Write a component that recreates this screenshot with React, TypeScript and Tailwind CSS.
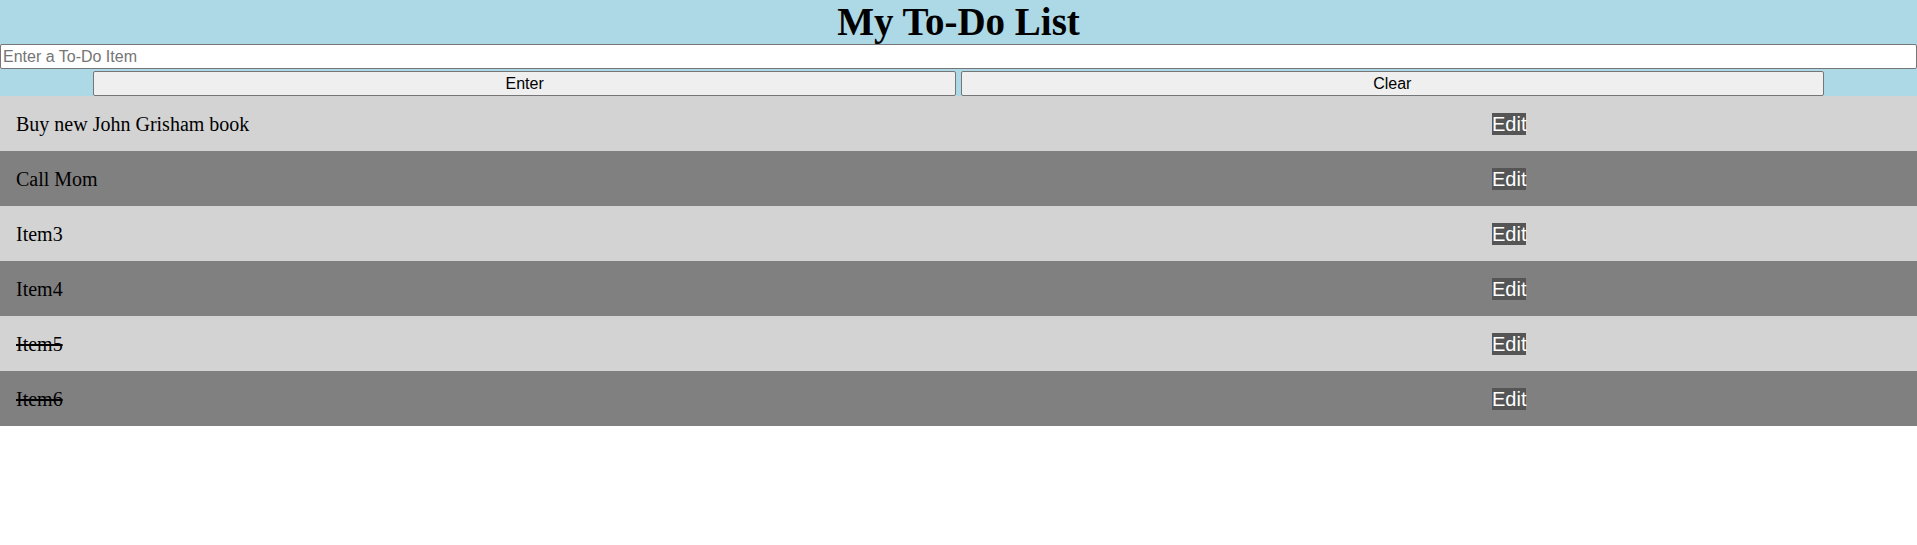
import React from 'react';

const items = [
  { id: 1, text: 'Buy new John Grisham book', done: false },
  { id: 2, text: 'Call Mom', done: false },
  { id: 3, text: 'Item3', done: false },
  { id: 4, text: 'Item4', done: false },
  { id: 5, text: 'Item5', done: true },
  { id: 6, text: 'Item6', done: true },
];

export default function App() {
  return (
    <div className="min-h-[545px] bg-white">
      {/* Header */}
      <div className="bg-[#add8e6]">
        <h1 className="m-0 text-center text-[39px] leading-[44px] font-bold text-black font-['Liberation_Serif','Times_New_Roman',serif]">
          My To-Do List
        </h1>
        <input
          type="text"
          placeholder="Enter a To-Do Item"
          className="block h-[25px] w-full bg-white border border-[#767676] rounded-[2px] px-[2px] text-[16px] text-black placeholder:text-[#757575] outline-none font-['Liberation_Sans',Arial,sans-serif]"
        />
        <div className="flex justify-center gap-[5px] pt-[2px]">
          <button className="w-[45%] h-[25px] bg-[#efefef] border border-[#767676] rounded-[2px] text-[16px] leading-none text-black font-['Liberation_Sans',Arial,sans-serif]">
            Enter
          </button>
          <button className="w-[45%] h-[25px] bg-[#efefef] border border-[#767676] rounded-[2px] text-[16px] leading-none text-black font-['Liberation_Sans',Arial,sans-serif]">
            Clear
          </button>
        </div>
      </div>

      {/* List */}
      <ul>
        {items.map((item, i) => (
          <li
            key={item.id}
            className={`flex items-center h-[55px] ${i % 2 === 0 ? 'bg-[#d3d3d3]' : 'bg-[#808080]'}`}
          >
            <span
              className={`w-[1492px] shrink-0 pl-4 text-[20px] text-black font-['Liberation_Serif','Times_New_Roman',serif] ${item.done ? 'line-through' : ''}`}
            >
              {item.text}
            </span>
            <button className="bg-[#555555] text-white text-[20px] leading-[22px] h-[22px] px-0 font-['Liberation_Sans',Arial,sans-serif]">
              Edit
            </button>
          </li>
        ))}
      </ul>
    </div>
  );
}
